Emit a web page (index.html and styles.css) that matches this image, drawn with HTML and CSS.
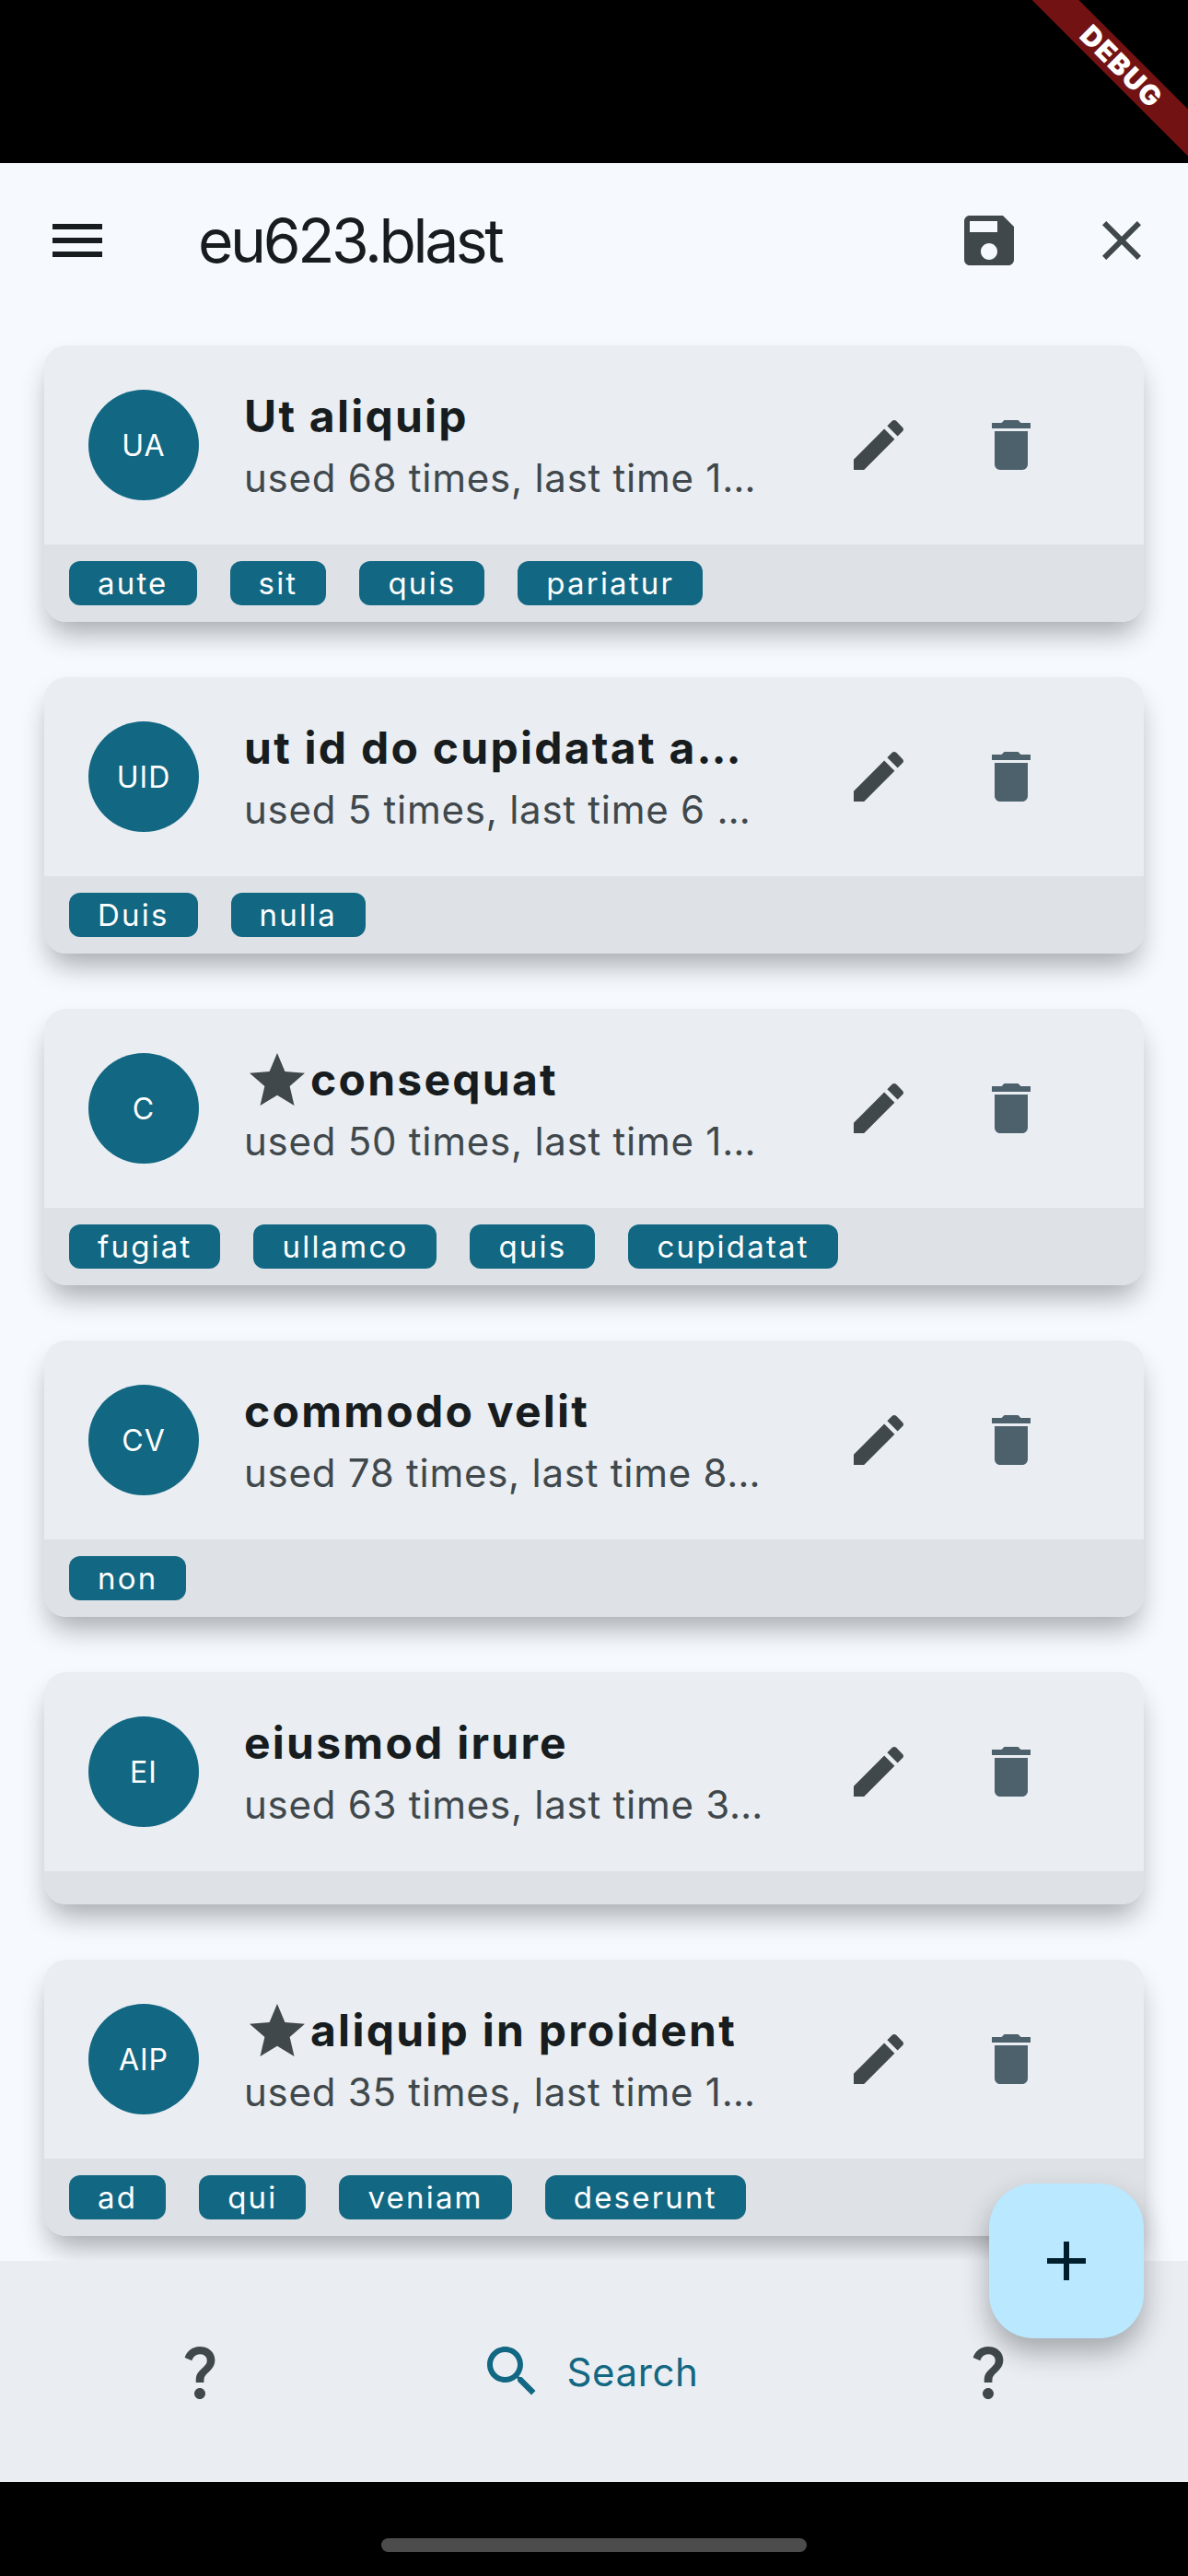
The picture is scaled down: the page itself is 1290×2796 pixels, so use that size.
FILE: index.html
```html
<!DOCTYPE html>
<html lang="en">
<head>
    <meta charset="UTF-8">
    <meta name="viewport" content="width=device-width, initial-scale=1.0">
    <title>eu623.blast</title>
    <link rel="stylesheet" href="styles.css">
</head>
<body>
    <svg class="icon-defs" aria-hidden="true">
        <symbol id="i-menu" viewBox="0 0 24 24"><path d="M3 18h18v-2H3v2zm0-5h18v-2H3v2zm0-7v2h18V6H3z"/></symbol>
        <symbol id="i-save" viewBox="0 0 24 24"><path d="M17 3H5c-1.11 0-2 .9-2 2v14c0 1.1.89 2 2 2h14c1.1 0 2-.9 2-2V7l-4-4zm-5 16c-1.66 0-3-1.34-3-3s1.34-3 3-3 3 1.34 3 3-1.34 3-3 3zm3-10H5V5h10v4z"/></symbol>
        <symbol id="i-close" viewBox="0 0 24 24"><path d="M19 6.41L17.59 5 12 10.59 6.41 5 5 6.41 10.59 12 5 17.59 6.41 19 12 13.41 17.59 19 19 17.59 13.41 12z"/></symbol>
        <symbol id="i-edit" viewBox="0 0 24 24"><path d="M3 17.25V21h3.75L17.81 9.94l-3.75-3.75L3 17.25zM20.71 7.04c.39-.39.39-1.02 0-1.41l-2.34-2.34c-.39-.39-1.02-.39-1.41 0l-1.83 1.83 3.75 3.75 1.83-1.83z"/></symbol>
        <symbol id="i-delete" viewBox="0 0 24 24"><path d="M6 19c0 1.1.9 2 2 2h8c1.1 0 2-.9 2-2V7H6v12zM19 4h-3.5l-1-1h-5l-1 1H5v2h14V4z"/></symbol>
        <symbol id="i-star" viewBox="0 0 24 24"><path d="M12 17.27L18.18 21l-1.64-7.03L22 9.24l-7.19-.61L12 2 9.19 8.63 2 9.24l5.46 4.73L5.82 21z"/></symbol>
        <symbol id="i-search" viewBox="0 0 24 24"><path d="M15.5 14h-.79l-.28-.27C15.41 12.59 16 11.11 16 9.5 16 5.91 13.09 3 9.5 3S3 5.91 3 9.5 5.91 16 9.5 16c1.61 0 3.09-.59 4.23-1.57l.27.28v.79l5 4.99L20.49 19l-4.99-5zm-6 0C7.01 14 5 11.99 5 9.5S7.01 5 9.5 5 14 7.01 14 9.5 11.99 14 9.5 14z"/></symbol>
        <symbol id="i-question" viewBox="0 0 24 24"><path d="M11.07 12.85c.77-1.39 2.25-2.21 3.11-3.44.91-1.29.4-3.7-2.18-3.7-1.69 0-2.52 1.28-2.87 2.34L6.54 6.96C7.25 4.83 9.18 3 11.99 3c2.35 0 3.96 1.07 4.78 2.41.7 1.15 1.11 3.3.03 4.9-1.2 1.77-2.35 2.31-2.97 3.45-.25.46-.35.76-.35 2.24h-2.89c-.01-.78-.13-2.05.48-3.15zM14 20c0 1.1-.9 2-2 2s-2-.9-2-2 .9-2 2-2 2 .9 2 2z"/></symbol>
        <symbol id="i-add" viewBox="0 0 24 24"><path d="M19 13h-6v6h-2v-6H5v-2h6V5h2v6h6v2z"/></symbol>
    </svg>

    <div class="app">
        <div class="status-bar"></div>

        <header class="app-bar">
            <div class="bar-slot bar-leading"><svg class="icon icon-dark"><use href="#i-menu"/></svg></div>
            <h1 class="app-title">eu623.blast</h1>
            <div class="bar-slot"><svg class="icon"><use href="#i-save"/></svg></div>
            <div class="bar-slot"><svg class="icon"><use href="#i-close"/></svg></div>
        </header>

        <main class="list">
            <article class="card">
                <div class="card-top">
                    <div class="avatar">UA</div>
                    <div class="card-text">
                        <div class="card-title"><span class="title-text">Ut aliquip</span></div>
                        <div class="card-sub">used 68 times, last time 1…</div>
                    </div>
                    <div class="action"><svg class="icon"><use href="#i-edit"/></svg></div>
                    <div class="action"><svg class="icon icon-trash"><use href="#i-delete"/></svg></div>
                </div>
                <div class="tags">
                    <span class="tag">aute</span>
                    <span class="tag">sit</span>
                    <span class="tag">quis</span>
                    <span class="tag">pariatur</span>
                </div>
            </article>

            <article class="card">
                <div class="card-top">
                    <div class="avatar">UID</div>
                    <div class="card-text">
                        <div class="card-title"><span class="title-text">ut id do cupidatat a…</span></div>
                        <div class="card-sub">used 5 times, last time 6 …</div>
                    </div>
                    <div class="action"><svg class="icon"><use href="#i-edit"/></svg></div>
                    <div class="action"><svg class="icon icon-trash"><use href="#i-delete"/></svg></div>
                </div>
                <div class="tags">
                    <span class="tag">Duis</span>
                    <span class="tag">nulla</span>
                </div>
            </article>

            <article class="card">
                <div class="card-top">
                    <div class="avatar">C</div>
                    <div class="card-text">
                        <div class="card-title"><svg class="icon"><use href="#i-star"/></svg><span class="title-text">consequat</span></div>
                        <div class="card-sub">used 50 times, last time 1…</div>
                    </div>
                    <div class="action"><svg class="icon"><use href="#i-edit"/></svg></div>
                    <div class="action"><svg class="icon icon-trash"><use href="#i-delete"/></svg></div>
                </div>
                <div class="tags">
                    <span class="tag">fugiat</span>
                    <span class="tag">ullamco</span>
                    <span class="tag">quis</span>
                    <span class="tag">cupidatat</span>
                </div>
            </article>

            <article class="card">
                <div class="card-top">
                    <div class="avatar">CV</div>
                    <div class="card-text">
                        <div class="card-title"><span class="title-text">commodo velit</span></div>
                        <div class="card-sub">used 78 times, last time 8…</div>
                    </div>
                    <div class="action"><svg class="icon"><use href="#i-edit"/></svg></div>
                    <div class="action"><svg class="icon icon-trash"><use href="#i-delete"/></svg></div>
                </div>
                <div class="tags">
                    <span class="tag">non</span>
                </div>
            </article>

            <article class="card">
                <div class="card-top">
                    <div class="avatar">EI</div>
                    <div class="card-text">
                        <div class="card-title"><span class="title-text">eiusmod irure</span></div>
                        <div class="card-sub">used 63 times, last time 3…</div>
                    </div>
                    <div class="action"><svg class="icon"><use href="#i-edit"/></svg></div>
                    <div class="action"><svg class="icon icon-trash"><use href="#i-delete"/></svg></div>
                </div>
                <div class="tags"></div>
            </article>

            <article class="card">
                <div class="card-top">
                    <div class="avatar">AIP</div>
                    <div class="card-text">
                        <div class="card-title"><svg class="icon"><use href="#i-star"/></svg><span class="title-text">aliquip in proident</span></div>
                        <div class="card-sub">used 35 times, last time 1…</div>
                    </div>
                    <div class="action"><svg class="icon"><use href="#i-edit"/></svg></div>
                    <div class="action"><svg class="icon icon-trash"><use href="#i-delete"/></svg></div>
                </div>
                <div class="tags">
                    <span class="tag">ad</span>
                    <span class="tag">qui</span>
                    <span class="tag">veniam</span>
                    <span class="tag">deserunt</span>
                </div>
            </article>
        </main>

        <nav class="bottom-nav">
            <div class="nav-item"><svg class="icon"><use href="#i-question"/></svg></div>
            <div class="nav-item nav-search"><svg class="icon"><use href="#i-search"/></svg><span>Search</span></div>
            <div class="nav-item"><svg class="icon"><use href="#i-question"/></svg></div>
        </nav>

        <div class="gesture-bar"><div class="home-pill"></div></div>

        <button class="fab"><svg class="icon"><use href="#i-add"/></svg></button>
        <div class="debug-banner">DEBUG</div>
    </div>
</body>
</html>
```

FILE: styles.css
```css
html, body {
    margin: 0;
    padding: 0;
}
body {
    font-family: Inter, "Noto Sans", sans-serif;
    background-color: #000;
}
.icon-defs {
    display: none;
}
.app {
    position: relative;
    width: 1290px;
    height: 2796px;
    display: flex;
    flex-direction: column;
    overflow: hidden;
    background-color: #f6faff;
}
.icon {
    width: 72px;
    height: 72px;
    flex-shrink: 0;
    fill: #40484c;
}
.icon-dark {
    fill: #171c1f;
}
.icon-trash {
    fill: #4d616c;
}

.status-bar {
    height: 177px;
    flex-shrink: 0;
    background-color: #000;
}

.app-bar {
    height: 168px;
    flex-shrink: 0;
    display: flex;
    align-items: center;
}
.bar-slot {
    width: 144px;
    display: flex;
    justify-content: center;
}
.bar-leading {
    width: 168px;
    margin-right: 47px;
}
.app-title {
    flex: 1;
    margin: 0;
    font-size: 66px;
    font-weight: 400;
    letter-spacing: -3.4px;
    color: #171c1f;
}

.list {
    flex: 1;
    min-height: 0;
    overflow: hidden;
    padding: 30px 48px 0;
    display: flex;
    flex-direction: column;
    gap: 60px;
}
.card {
    flex-shrink: 0;
    border-radius: 24px;
    background-color: #eaeef3;
    box-shadow: 0 18px 30px -6px rgba(0, 0, 0, 0.33);
    overflow: hidden;
}
.card-top {
    height: 216px;
    display: flex;
    align-items: center;
    padding-left: 48px;
    padding-right: 72px;
}
.avatar {
    width: 120px;
    height: 120px;
    flex-shrink: 0;
    border-radius: 50%;
    background-color: #126782;
    color: #fff;
    font-size: 32px;
    letter-spacing: 1px;
    display: flex;
    align-items: center;
    justify-content: center;
}
.card-text {
    flex: 1;
    min-width: 0;
    margin: 0 47px 0 49px;
}
.card-title {
    height: 72px;
    display: flex;
    align-items: center;
    font-size: 48px;
    font-weight: 700;
    letter-spacing: 2.25px;
    color: #171c1f;
}
.title-text {
    margin-bottom: 3px;
    white-space: nowrap;
}
.card-sub {
    height: 60px;
    line-height: 60px;
    font-size: 42px;
    letter-spacing: 0.75px;
    color: #40484c;
    white-space: nowrap;
}
.action {
    width: 144px;
    flex-shrink: 0;
    display: flex;
    justify-content: center;
}

.tags {
    display: flex;
    gap: 36px;
    padding: 18px 27px;
    background-color: #dee2e7;
}
.tag {
    height: 48px;
    line-height: 48px;
    padding: 0 31px;
    border-radius: 12px;
    background-color: #126782;
    color: #fff;
    font-size: 33px;
    letter-spacing: 2.2px;
}

.bottom-nav {
    height: 240px;
    flex-shrink: 0;
    padding: 0 3px;
    display: grid;
    grid-template-columns: repeat(3, 1fr);
    align-items: center;
    background-color: #eaeef3;
}
.nav-item {
    display: flex;
    align-items: center;
    justify-content: center;
}
.nav-search {
    gap: 24px;
    padding-right: 12px;
    color: #126782;
    font-size: 42px;
    letter-spacing: 0.6px;
}
.nav-search .icon {
    fill: #126782;
}

.gesture-bar {
    height: 102px;
    flex-shrink: 0;
    display: flex;
    justify-content: center;
    background-color: #000;
}
.home-pill {
    width: 462px;
    height: 15px;
    margin-top: 61px;
    border-radius: 8px;
    background-color: #4c4c4c;
}

.fab {
    position: absolute;
    right: 48px;
    bottom: 258px;
    width: 168px;
    height: 168px;
    padding: 0;
    border: none;
    border-radius: 48px;
    background-color: #bae8ff;
    box-shadow: 0 15px 30px rgba(0, 0, 0, 0.3);
    display: flex;
    align-items: center;
    justify-content: center;
}
.fab .icon {
    fill: #001e2c;
}

.debug-banner {
    position: absolute;
    left: 1068px;
    top: 54px;
    width: 300px;
    height: 36px;
    line-height: 36px;
    transform: rotate(45deg);
    background-color: #731212;
    color: #fff;
    font-size: 30px;
    font-weight: 900;
    letter-spacing: 1.5px;
    text-align: center;
}
```
